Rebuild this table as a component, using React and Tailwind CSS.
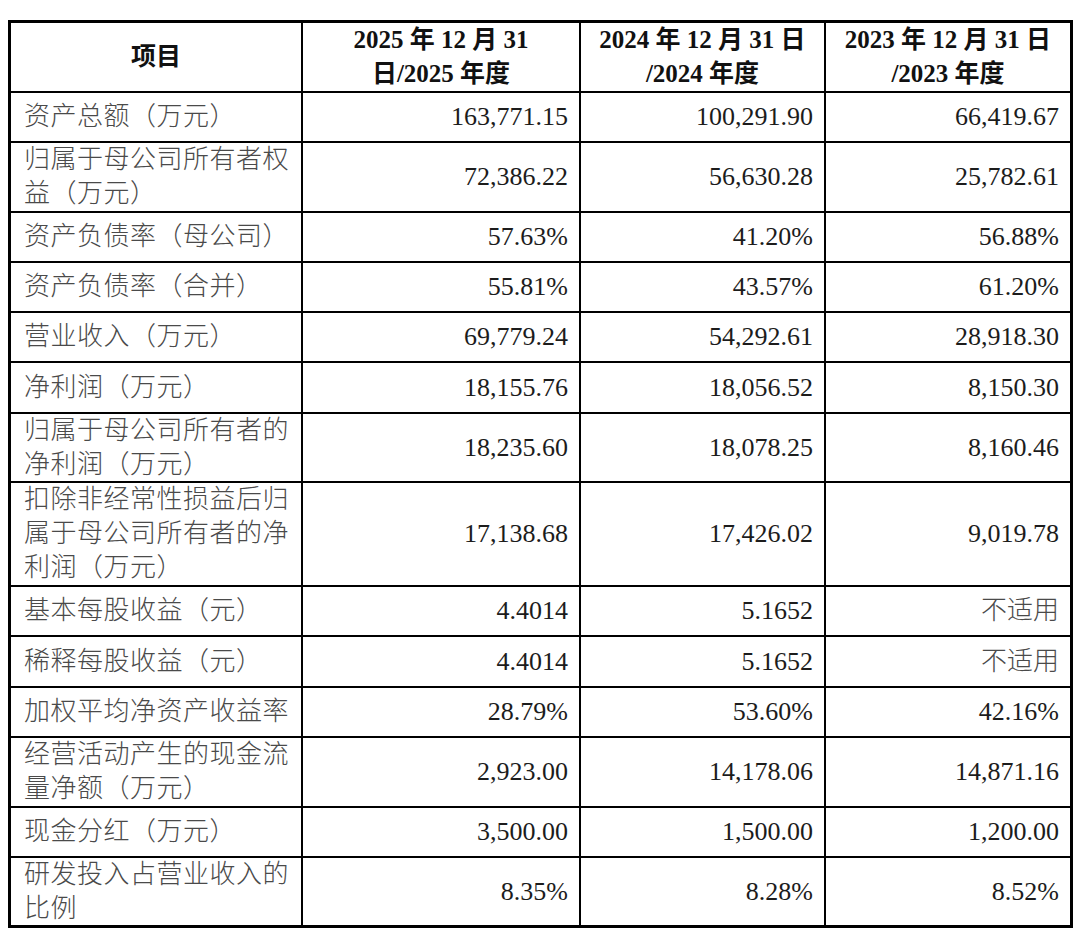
const rows = [
  { label: ["资产总额（万元）"], values: ["163,771.15", "100,291.90", "66,419.67"], h: "h-[48px]" },
  { label: ["归属于母公司所有者权", "益（万元）"], values: ["72,386.22", "56,630.28", "25,782.61"], h: "h-[68px]" },
  { label: ["资产负债率（母公司）"], values: ["57.63%", "41.20%", "56.88%"], h: "h-[48px]" },
  { label: ["资产负债率（合并）"], values: ["55.81%", "43.57%", "61.20%"], h: "h-[48px]" },
  { label: ["营业收入（万元）"], values: ["69,779.24", "54,292.61", "28,918.30"], h: "h-[48px]" },
  { label: ["净利润（万元）"], values: ["18,155.76", "18,056.52", "8,150.30"], h: "h-[49px]" },
  { label: ["归属于母公司所有者的", "净利润（万元）"], values: ["18,235.60", "18,078.25", "8,160.46"], h: "h-[67px]" },
  {
    label: ["扣除非经常性损益后归", "属于母公司所有者的净", "利润（万元）"],
    values: ["17,138.68", "17,426.02", "9,019.78"],
    h: "h-[102px]",
  },
  { label: ["基本每股收益（元）"], values: ["4.4014", "5.1652", "不适用"], h: "h-[48px]" },
  { label: ["稀释每股收益（元）"], values: ["4.4014", "5.1652", "不适用"], h: "h-[49px]" },
  { label: ["加权平均净资产收益率"], values: ["28.79%", "53.60%", "42.16%"], h: "h-[48px]" },
  { label: ["经营活动产生的现金流", "量净额（万元）"], values: ["2,923.00", "14,178.06", "14,871.16"], h: "h-[68px]" },
  { label: ["现金分红（万元）"], values: ["3,500.00", "1,500.00", "1,200.00"], h: "h-[48px]" },
  { label: ["研发投入占营业收入的", "比例"], values: ["8.35%", "8.28%", "8.52%"], h: "h-[67px]" },
];

const font = "font-['Liberation_Serif','Noto_Sans_CJK_SC',serif]";

const HeadCell = ({ lines }) => (
  <div className="flex h-[68px] flex-col items-center justify-center bg-white text-center text-[25px] font-bold leading-[34px] text-[#111]">
    {lines.map((l, i) => (
      <span key={i} className="whitespace-pre">
        {l}
      </span>
    ))}
  </div>
);

const Row = ({ row }) => (
  <>
    <div className={`flex ${row.h} flex-col justify-center bg-white pl-[13px] text-[26px] font-light leading-[34px] text-[#4a4a4a]`}>
      {row.label.map((l, i) => (
        <span key={i} className="tracking-[0.5px] whitespace-nowrap">
          {l}
        </span>
      ))}
    </div>
    {row.values.map((v, i) => (
      <div
        key={i}
        className={`flex ${row.h} items-center justify-end bg-white pr-[11px] text-[26px] leading-[34px] ${
          v === "不适用" ? "font-light text-[#4a4a4a]" : "text-[#1c1c1c]"
        }`}
      >
        {v}
      </div>
    ))}
  </>
);

export default function App() {
  return (
    <div className={`min-h-[940px] w-[1080px] bg-white pl-[8px] pt-[20px] ${font}`}>
      <div className="w-[1065px] border-[3px] border-black bg-black">
        <div className="grid grid-cols-[290px_276px_243px_244px] gap-[2px]">
          <HeadCell lines={["项目"]} />
          <HeadCell lines={["2025 年 12 月 31", "日/2025 年度"]} />
          <HeadCell lines={["2024 年 12 月 31 日", "/2024 年度"]} />
          <HeadCell lines={["2023 年 12 月 31 日", "/2023 年度"]} />
          {rows.map((r, i) => (
            <Row key={i} row={r} />
          ))}
        </div>
      </div>
    </div>
  );
}
